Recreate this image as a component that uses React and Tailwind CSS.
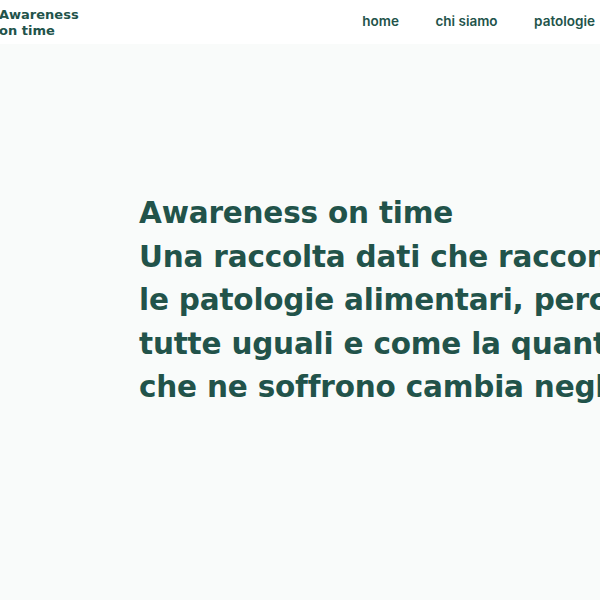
import React from 'react';

const green = 'text-[#22534a]';

function App() {
  return (
    <div className="w-full h-[600px] overflow-hidden bg-[#f9fbfa]">
      <header className="h-[44px] bg-white flex items-center justify-between">
        <div className={`${green} font-['DejaVu_Sans',sans-serif] font-bold text-[13px] leading-[16px] -ml-[1px] pt-[1px]`}>
          Awareness
          <br />
          on time
        </div>
        <nav className={`${green} font-['Inter',sans-serif] flex items-center gap-[36.5px] font-semibold text-[13.5px] pr-[5px] pb-[1px]`}>
          <a href="#">home</a>
          <a href="#">chi siamo</a>
          <a href="#">patologie</a>
        </nav>
      </header>

      <main className="pl-[139px] pt-[148px]">
        <h1 className={`${green} font-['DejaVu_Sans',sans-serif] font-bold text-[29.5px] leading-[43.5px] tracking-[-0.2px] whitespace-nowrap`}>
          Awareness on time
          <br />
          Una raccolta dati che racconta
          <br />
          le patologie alimentari, perché non sono
          <br />
          tutte uguali e come la quantità di persone
          <br />
          che ne soffrono cambia negli anni
        </h1>
      </main>
    </div>
  );
}

export default App;
